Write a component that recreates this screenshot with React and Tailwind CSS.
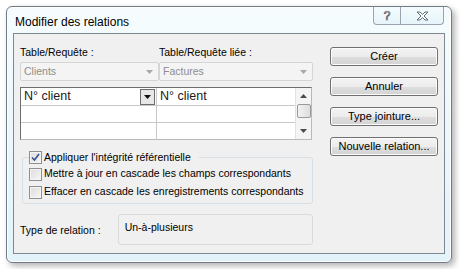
import React from "react";

const font = { fontFamily: '"Liberation Sans", Arial, sans-serif' };

function DialogButton({ children }) {
  return (
    <button
      type="button"
      className="h-[19px] w-[108px] whitespace-nowrap rounded-[3px] border border-[#707070] bg-[linear-gradient(#f3f3f3_0%,#ececec_50%,#dedede_51%,#d3d3d3_100%)] text-[11px] leading-[17px] text-black shadow-[inset_0_0_0_1px_#fcfcfc]"
    >
      {children}
    </button>
  );
}

function Checkbox({ checked }) {
  return (
    <span className="flex h-[13px] w-[13px] shrink-0 items-center justify-center border border-[#8f8f8f] bg-[linear-gradient(135deg,#dcdcdc,#f6f6f6)] shadow-[inset_0_0_0_1px_#f4f4f4]">
      {checked && (
        <svg width="9" height="9" viewBox="0 0 9 9">
          <path d="M1 4.5 L3.5 7 L8 1" fill="none" stroke="#3a4f8c" strokeWidth="1.6" />
        </svg>
      )}
    </span>
  );
}

function Combo({ label, width }) {
  return (
    <div
      className={`flex h-[19px] items-center justify-between rounded-[2px] border border-[#d5d5d5] bg-[#f4f4f4] pl-[3px] pr-[5px] text-[#8d8d8d] ${width}`}
    >
      <span>{label}</span>
      <svg width="7" height="4" viewBox="0 0 7 4">
        <path d="M0 0 H7 L3.5 4 Z" fill="#a8a8a8" />
      </svg>
    </div>
  );
}

export default function App() {
  return (
    <div className="h-[269px] w-[460px] overflow-hidden bg-white pl-[6px] pt-[6px]" style={font}>
      <div className="flex h-[257px] w-[446px] flex-col rounded-[6px] border border-[#6f7b86] bg-[linear-gradient(#f6fcfe,#e2f3f9)] shadow-[3px_3px_6px_rgba(0,0,0,0.3),inset_0_0_0_1px_#ffffff]">
        {/* title bar */}
        <div className="flex h-[26px] items-start">
          <span className="ml-[8px] mt-[7px] text-[12px] leading-[16px] text-black">
            Modifier des relations
          </span>
          <div className="ml-auto mr-[7px] flex h-[18px] rounded-b-[4px] border border-t-0 border-[#98a4b0] bg-[linear-gradient(#f4fbfd,#e6f4f9)]">
            <div className="flex w-[27px] items-center justify-center border-r border-[#98a4b0] text-[12px] text-transparent [-webkit-text-stroke:0.7px_#555]">
              ?
            </div>
            <div className="flex w-[42px] items-center justify-center">
              <svg width="13" height="10" viewBox="0 0 13 10">
                <path
                  d="M1 1 H4 L6.5 3.5 L9 1 H12 L8 5 L12 9 H9 L6.5 6.5 L4 9 H1 L5 5 Z"
                  fill="#ffffff"
                  stroke="#5f6b76"
                  strokeWidth="1"
                  strokeLinejoin="round"
                />
              </svg>
            </div>
          </div>
        </div>

        {/* client area */}
        <div className="mx-[6px] flex h-[221px] border border-[#7d8893] bg-[#f0f0f0] text-black">
          <div className="ml-[6px] flex w-[293px] flex-col whitespace-nowrap text-[10.5px]">
            <div className="mt-[11px] flex h-[16px] items-center">
              <span className="w-[139px]">Table/Requête :</span>
              <span>Table/Requête liée :</span>
            </div>
            <div className="mt-[1px] flex">
              <Combo label="Clients" width="w-[139px]" />
              <Combo label="Factures" width="w-[154px]" />
            </div>

            {/* field grid */}
            <div className="mt-[6px] flex h-[53px] w-[292px] border border-[#6d6d6d] border-b-[#b9b9b9] border-r-[#b9b9b9] bg-white">
              <div className="flex flex-1 flex-col">
                <div className="flex h-[18px] border-b border-[#c8c8c8]">
                  <div className="flex w-[136px] items-center border-r border-[#c8c8c8] pl-[3px] text-[12.5px] leading-none text-[#1a1a1a]">
                    <span className="flex-1">N° client</span>
                    <span className="mr-[1px] flex h-[16px] w-[15px] items-center justify-center border border-[#6d6d6d] bg-[#e8e8e8]">
                      <svg width="7" height="4" viewBox="0 0 7 4">
                        <path d="M0 0 H7 L3.5 4 Z" fill="#111" />
                      </svg>
                    </span>
                  </div>
                  <div className="flex flex-1 items-center pl-[3px] text-[12.5px] leading-none text-[#1a1a1a]">
                    N° client
                  </div>
                </div>
                <div className="flex h-[17px] border-b border-[#c8c8c8]">
                  <div className="w-[136px] border-r border-[#c8c8c8]" />
                  <div className="flex-1" />
                </div>
                <div className="flex flex-1">
                  <div className="w-[136px] border-r border-[#c8c8c8]" />
                  <div className="flex-1" />
                </div>
              </div>
              {/* scrollbar */}
              <div className="flex w-[16px] flex-col items-center border-l border-[#e3e3e3] bg-[#f4f4f4]">
                <div className="flex h-[16px] items-center justify-center">
                  <svg width="7" height="4" viewBox="0 0 7 4">
                    <path d="M0 4 H7 L3.5 0 Z" fill="#4a4a4a" />
                  </svg>
                </div>
                <div className="h-[14px] w-[14px] rounded-[2px] border border-[#9a9a9a] bg-[linear-gradient(90deg,#f2f2f2,#dedede)]" />
                <div className="mt-auto flex h-[16px] items-center justify-center">
                  <svg width="7" height="4" viewBox="0 0 7 4">
                    <path d="M0 0 H7 L3.5 4 Z" fill="#4a4a4a" />
                  </svg>
                </div>
              </div>
            </div>

            {/* referential integrity group */}
            <fieldset className="ml-[2px] mt-[9px] h-[55px] w-[291px] min-w-0 rounded-[3px] border border-[#d5dfe5] px-[6px] pb-0">
              <legend className="flex items-center gap-[2px] pr-[8px]">
                <Checkbox checked />
                <span className="leading-[17px]">Appliquer l'intégrité référentielle</span>
              </legend>
              <div className="-mt-[1px] flex h-[18px] items-center gap-[2px]">
                <Checkbox />
                <span>Mettre à jour en cascade les champs correspondants</span>
              </div>
              <div className="flex h-[18px] items-center gap-[2px]">
                <Checkbox />
                <span>Effacer en cascade les enregistrements correspondants</span>
              </div>
            </fieldset>

            <div className="mt-[10px] flex items-center">
              <span className="w-[98px] pt-[3px]">Type de relation :</span>
              <div className="h-[31px] w-[196px] rounded-[3px] border border-[#dadada] bg-[#f0f0f0] pl-[6px] pt-[5px]">
                Un-à-plusieurs
              </div>
            </div>
          </div>

          <div className="ml-[17px] flex flex-col gap-[11px] pt-[13px]">
            <DialogButton>Créer</DialogButton>
            <DialogButton>Annuler</DialogButton>
            <DialogButton>Type jointure...</DialogButton>
            <DialogButton>Nouvelle relation...</DialogButton>
          </div>
        </div>
      </div>
    </div>
  );
}
